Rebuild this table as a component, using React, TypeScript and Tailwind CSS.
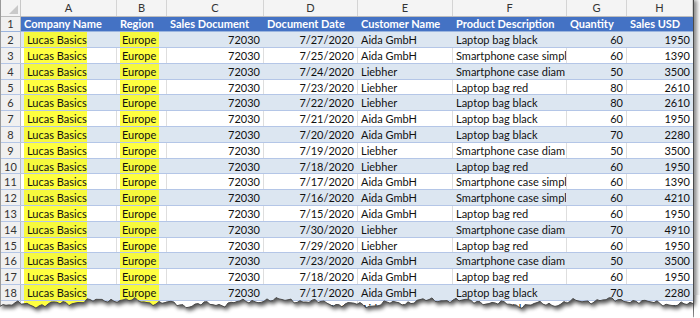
import React from "react";

type Row = { doc: string; date: string; cust: string; prod: string; qty: string; usd: string };

const rows: Row[] = [
  { doc: "72030", date: "7/27/2020", cust: "Aida GmbH", prod: "Laptop bag black", qty: "60", usd: "1950" },
  { doc: "72030", date: "7/25/2020", cust: "Aida GmbH", prod: "Smartphone case simpl", qty: "60", usd: "1390" },
  { doc: "72030", date: "7/24/2020", cust: "Liebher", prod: "Smartphone case diam", qty: "50", usd: "3500" },
  { doc: "72030", date: "7/23/2020", cust: "Liebher", prod: "Laptop bag red", qty: "80", usd: "2610" },
  { doc: "72030", date: "7/22/2020", cust: "Liebher", prod: "Laptop bag black", qty: "80", usd: "2610" },
  { doc: "72030", date: "7/21/2020", cust: "Aida GmbH", prod: "Laptop bag black", qty: "60", usd: "1950" },
  { doc: "72030", date: "7/20/2020", cust: "Aida GmbH", prod: "Laptop bag black", qty: "70", usd: "2280" },
  { doc: "72030", date: "7/19/2020", cust: "Liebher", prod: "Smartphone case diam", qty: "50", usd: "3500" },
  { doc: "72030", date: "7/18/2020", cust: "Liebher", prod: "Laptop bag red", qty: "60", usd: "1950" },
  { doc: "72030", date: "7/17/2020", cust: "Aida GmbH", prod: "Smartphone case simpl", qty: "60", usd: "1390" },
  { doc: "72030", date: "7/16/2020", cust: "Aida GmbH", prod: "Smartphone case simpl", qty: "60", usd: "4210" },
  { doc: "72030", date: "7/15/2020", cust: "Aida GmbH", prod: "Laptop bag red", qty: "60", usd: "1950" },
  { doc: "72030", date: "7/30/2020", cust: "Liebher", prod: "Smartphone case diam", qty: "70", usd: "4910" },
  { doc: "72030", date: "7/29/2020", cust: "Liebher", prod: "Laptop bag red", qty: "60", usd: "1950" },
  { doc: "72030", date: "7/23/2020", cust: "Aida GmbH", prod: "Smartphone case diam", qty: "50", usd: "3500" },
  { doc: "72030", date: "7/18/2020", cust: "Aida GmbH", prod: "Laptop bag red", qty: "60", usd: "1950" },
  { doc: "72030", date: "7/17/2020", cust: "Aida GmbH", prod: "Laptop bag black", qty: "70", usd: "2280" },
  { doc: "72030", date: "7/16/2020", cust: "Aida GmbH", prod: "Laptop bag black", qty: "70", usd: "2280" },
];

// torn paper edge, y offsets inside the svg
function edgePoints() {
  const pts: [number, number][] = [];
  for (let x = 0; x <= 694; x += 3) {
    const y =
      7.5 +
      2.4 * Math.sin(x * 0.038 + 0.4) +
      1.6 * Math.sin(x * 0.17 + 1.3) +
      1.2 * Math.sin(x * 0.53 + 2.1) +
      0.8 * Math.sin(x * 1.29) +
      0.5 * Math.sin(x * 2.3 + 0.7);
    pts.push([x, +y.toFixed(1)]);
  }
  return pts;
}

function TornEdge() {
  const pts = edgePoints();
  const line = pts.map(([x, y]) => `${x},${y}`).join(" ");
  const below = `M0,${pts[0][1]} L${line} L694,40 L0,40 Z`;
  const above = `M0,-20 L694,-20 L${line.split(" ").reverse().join(" L")} Z`;
  return (
    <svg className="absolute left-0 top-[295px]" width="700" height="23" viewBox="0 0 700 23">
      <defs>
        <filter id="blur" x="-10%" y="-100%" width="120%" height="300%">
          <feGaussianBlur stdDeviation="2" />
        </filter>
        <clipPath id="below">
          <path d={below} />
          <rect x="694" y="-20" width="10" height="60" />
        </clipPath>
      </defs>
      <path d={below} fill="#ffffff" />
      <rect x="694" y="0" width="6" height="23" fill="#ffffff" />
      <g clipPath="url(#below)">
        <path d={above} transform="translate(2,3)" fill="#000" opacity="0.7" filter="url(#blur)" />
      </g>
      <polyline points={line} fill="none" stroke="#4a4a4a" strokeWidth="1" />
    </svg>
  );
}

const cell = "h-full border-r flex items-center px-[3px] overflow-hidden whitespace-nowrap";

export default function App() {
  return (
    <div className="relative w-[700px] h-[318px] overflow-hidden bg-white text-[11px] leading-none text-[#111]" style={{ fontFamily: "Lato, 'Liberation Sans', sans-serif" }}>
      <div className="w-[694px] border-l border-[#9a9a9a] border-r border-r-[#4a4a4a] shadow-[3px_0_4px_rgba(0,0,0,0.45)] bg-white">
        {/* column letters */}
        <div className="flex h-[16.5px] bg-[#f4f4f4] border-b border-[#bdbdbd] text-[#333]">
          <div className="w-[20px] h-full border-r border-[#c8c8c8] flex items-end justify-end p-[2px]">
            <div className="w-0 h-0 border-l-[9px] border-l-transparent border-b-[9px] border-b-[#c9c9c9]" />
          </div>
          {[
            ["A", "w-[96px]"],
            ["B", "w-[50px]"],
            ["C", "w-[97px]"],
            ["D", "w-[94px]"],
            ["E", "w-[95px]"],
            ["F", "w-[114px]"],
            ["G", "w-[60px]"],
            ["H", "w-[66px]"],
          ].map(([l, w]) => (
            <div key={l} className={`${w} h-full border-r border-[#d4d4d4] flex items-center justify-center`}>
              {l}
            </div>
          ))}
        </div>

        {/* header row */}
        <div className="flex h-[15.8px] border-b border-[#9bb5de]">
          <div className="w-[20px] h-full bg-[#f0f0f0] border-r border-[#bdbdbd] flex items-center justify-center text-[#333]">1</div>
          <div className="flex flex-1 h-full bg-[#4472c4] text-white font-bold">
            <div className="w-[96px] flex items-center px-[3px]">Company Name</div>
            <div className="w-[50px] flex items-center px-[3px]">Region</div>
            <div className="w-[97px] flex items-center px-[3px]">Sales Document</div>
            <div className="w-[94px] flex items-center px-[3px]">Document Date</div>
            <div className="w-[95px] flex items-center px-[3px]">Customer Name</div>
            <div className="w-[114px] flex items-center px-[3px]">Product Description</div>
            <div className="w-[60px] flex items-center px-[3px]">Quantity</div>
            <div className="w-[66px] flex items-center px-[3px]">Sales USD</div>
          </div>
        </div>

        {/* data rows */}
        {rows.map((r, i) => {
          const n = i + 2;
          const band = n % 2 === 0;
          const bg = band ? "bg-[#dce6f1]" : "bg-white";
          const line = band ? "border-[#dce6f1]" : "border-[#dedede]";
          return (
            <div key={n} className={`flex h-[15.8px] border-b border-[#b4c6e7] ${bg}`}>
              <div className="w-[20px] h-full bg-[#f0f0f0] border-r border-[#bdbdbd] flex items-center justify-center text-[#333]">{n}</div>
              <div className={`w-[96px] ${cell} ${line} px-0`}>
                <div className="w-[63px] h-full flex items-center pl-[3px] bg-[#ffff00]/75">Lucas Basics</div>
              </div>
              <div className={`w-[50px] ${cell} ${line} px-0`}>
                <div className="w-[39px] h-full flex items-center pl-[2px] bg-[#ffff00]/75">Europe</div>
              </div>
              <div className={`w-[97px] ${cell} ${line} justify-end`}>{r.doc}</div>
              <div className={`w-[94px] ${cell} ${line} justify-end`}>{r.date}</div>
              <div className={`w-[95px] ${cell} ${line}`}>{r.cust}</div>
              <div className={`w-[114px] ${cell} ${line}`}>{r.prod}</div>
              <div className={`w-[60px] ${cell} ${line} justify-end`}>{r.qty}</div>
              <div className={`w-[66px] ${cell} border-r-0 justify-end`}>{r.usd}</div>
            </div>
          );
        })}
      </div>
      <TornEdge />
    </div>
  );
}
